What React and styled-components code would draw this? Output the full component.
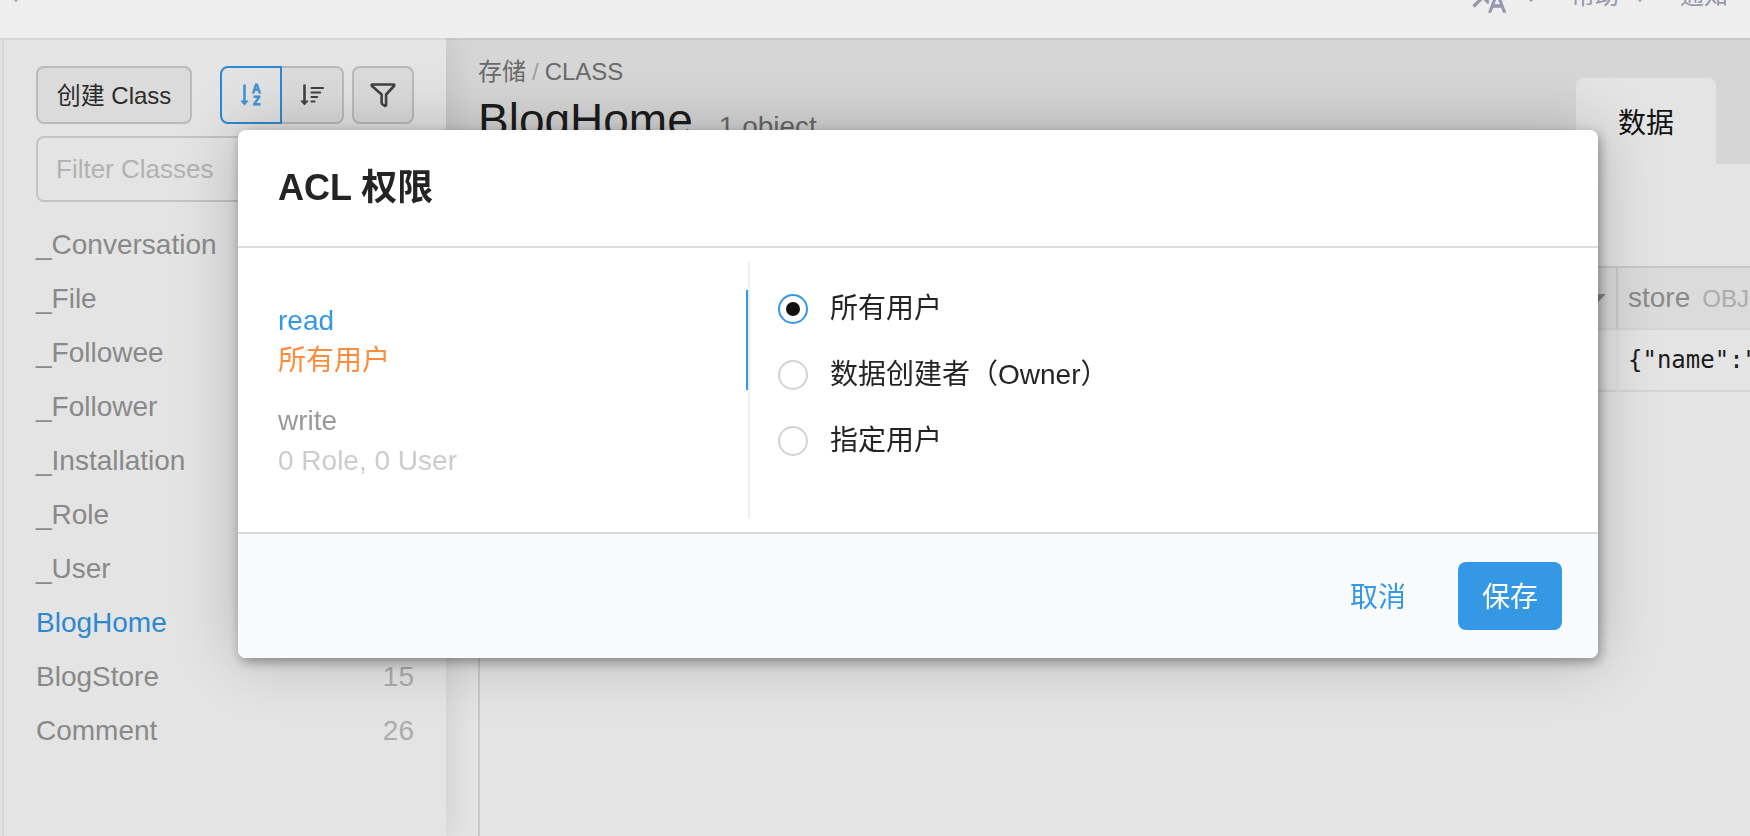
import React, { useState } from "react";
import styled, { createGlobalStyle, css } from "styled-components";
import { MdTranslate } from "react-icons/md";

const GlobalStyle = createGlobalStyle`
  *, *::before, *::after { box-sizing: border-box; }
  html, body, #root { height: 100%; }
  body {
    margin: 0;
    overflow: hidden;
    background: #e4e4e4;
    color: #242424;
    font-family: "Liberation Sans", "Noto Sans CJK SC", sans-serif;
    font-size: 28px;
  }
  button, input { font-family: inherit; margin: 0; }
  button { cursor: pointer; }
  h1, h2, p, ul { margin: 0; padding: 0; }
`;

const Page = styled.div`
  display: flex;
  flex-direction: column;
  min-height: 100%;
`;

/* Top navigation, partly scrolled out of view */
const TopBar = styled.header`
  position: relative;
  z-index: 2;
  display: flex;
  align-items: center;
  height: 84px;
  margin-top: -46px;
  padding: 0 22px 0 9px;
  background: #eeeeee;
  color: #9697ae;
`;

const TopNav = styled.nav`
  display: flex;
  align-items: center;
  margin-left: auto;
`;

const NavButton = styled.button`
  display: flex;
  align-items: center;
  gap: ${(p) => p.$gap || 0}px;
  margin-left: ${(p) => p.$space || 0}px;
  padding: 0;
  border: 0;
  background: none;
  color: inherit;
  font-size: 24px;
  line-height: 24px;
`;

const Caret = styled.span`
  width: 0;
  height: 0;
  border: ${(p) => p.$size}px solid transparent;
  border-top-color: currentColor;
  border-bottom-width: 0;
`;

const NavCaret = styled(Caret)`
  margin-top: 4px;
`;

const Columns = styled.div`
  display: flex;
  flex: 1;
`;

const Sidebar = styled.aside`
  position: relative;
  z-index: 1;
  flex: none;
  display: flex;
  width: 446px;
  padding-left: 2px;
  border-top: 2px solid #d7d7d7;
  background: #e4e4e4;
  box-shadow: 0 0 32px rgba(0, 0, 0, 0.12);
`;

const SidebarInner = styled.div`
  flex: 1;
  padding: 26px 32px 0;
  border-left: 2px solid #d7d7d7;
`;

const Toolbar = styled.div`
  display: flex;
  gap: 8px;
  margin-bottom: 12px;
`;

const ToolButton = styled.button`
  display: flex;
  align-items: center;
  justify-content: center;
  width: 62px;
  height: 58px;
  padding: 0;
  border: 2px solid #bababa;
  border-radius: 8px;
  background: #dbdbdb;
  color: #424242;
`;

const CreateButton = styled(ToolButton)`
  width: 156px;
  margin-right: auto;
  padding-bottom: 4px;
  color: #2c2c2c;
  font-size: 24px;
  white-space: nowrap;
`;

const SortGroup = styled.div`
  display: flex;

  ${ToolButton}:first-child { border-radius: 8px 0 0 8px; }
  ${ToolButton}:last-child { border-left-width: 0; border-radius: 0 8px 8px 0; }
`;

const SortButton = styled(ToolButton)`
  ${(p) =>
    p["aria-pressed"] &&
    css`
      border-color: #2d89cf;
      background: #e2e2e2;
      color: #4194d7;
    `}
`;

const FilterInput = styled.input`
  display: block;
  width: 100%;
  height: 66px;
  margin-bottom: 16px;
  padding: 0 18px;
  border: 2px solid #c3c3c3;
  border-radius: 8px;
  background: transparent;
  font-size: 26px;
  &::placeholder { color: #b2b2b2; opacity: 1; }
`;

const ClassList = styled.ul`
  list-style: none;
`;

const ClassLink = styled.a`
  display: flex;
  justify-content: space-between;
  color: ${(p) => (p.$current ? "#2d89cf" : "#898989")};
  line-height: 54px;
  text-decoration: none;
`;

const Count = styled.span`
  color: #acacac;
`;

const Main = styled.main`
  flex: 1;
  min-width: 0;
  display: flex;
  flex-direction: column;
`;

const MainHeader = styled.div`
  display: flex;
  align-items: flex-end;
  justify-content: space-between;
  height: 126px;
  padding: 0 34px 0 32px;
  border-top: 2px solid #c9c9c9;
  background: #d6d6d6;
`;

const Heading = styled.div`
  align-self: flex-start;
  padding-top: 16px;
`;

const Breadcrumb = styled.nav`
  display: flex;
  gap: 6px;
  color: #6a6a6a;
  font-size: 24px;
  line-height: 32px;
  a { color: inherit; text-decoration: none; }
`;

const Slash = styled.span`
  color: #a0a0a0;
`;

const TitleRow = styled.div`
  display: flex;
  align-items: baseline;
  gap: 26px;
  line-height: 64px;
`;

const Title = styled.h1`
  color: #1c1c1c;
  font-size: 46px;
  font-weight: 400;
`;

const ObjectCount = styled.span`
  color: #6a6a6a;
`;

const Tab = styled.button`
  width: 140px;
  height: 86px;
  padding: 0;
  border: 0;
  border-radius: 8px 8px 0 0;
  background: #e4e4e4;
  color: #111;
  font-size: 28px;
`;

const Grid = styled.div`
  flex: 1;
  margin: 102px 0 0 32px;
  border-top: 2px solid #c9c9c9;
  border-left: 2px solid #c9c9c9;
  overflow: hidden;
`;

const Table = styled.table`
  width: 100%;
  table-layout: fixed;
  border-spacing: 0;
`;

const StoreCol = styled.col`
  width: 132px;
`;

const HeadCell = styled.th`
  height: 62px;
  padding: 0 10px;
  border-right: 2px solid #c9c9c9;
  border-bottom: 2px solid #d5d5d5;
  background: #dbdbdb;
  color: #8a8a8a;
  font-weight: 400;
  text-align: left;
  white-space: nowrap;
  overflow: hidden;
  &:last-child { border-right: 0; }
`;

const HeadMenu = styled.span`
  display: flex;
  justify-content: flex-end;
`;

const FieldType = styled.span`
  margin-left: 12px;
  color: #acacac;
  font-size: 24px;
`;

const Cell = styled.td`
  height: 62px;
  padding: 0 10px;
  border-right: 2px solid #dedede;
  border-bottom: 2px solid #d5d5d5;
  color: #1c1c1c;
  font-family: "DejaVu Sans Mono", monospace;
  font-size: 24px;
  white-space: nowrap;
  overflow: hidden;
  &:last-child { border-right: 0; }
`;

const Overlay = styled.div`
  position: fixed;
  inset: 0;
  z-index: 10;
  padding: 130px 152px 0 238px;
`;

const Dialog = styled.section`
  border-radius: 8px;
  background: #fff;
  box-shadow: 0 0 64px rgba(0, 0, 0, 0.22), 2px 4px 12px rgba(0, 0, 0, 0.35);
`;

const DialogHeader = styled.header`
  padding: 36px 40px;
  border-bottom: 2px solid #dcdcdc;
`;

const DialogTitle = styled.h2`
  font-size: 36px;
  font-weight: 700;
  line-height: 44px;
`;

const DialogBody = styled.div`
  display: flex;
  padding: 14px 0;
`;

const Permissions = styled.div`
  flex: none;
  width: 37.5%;
  padding: 28px 0;
`;

const Permission = styled.button`
  display: block;
  width: 100%;
  padding: 11px 40px 9px;
  border: 0;
  border-right: 2px solid ${(p) => (p.$active ? "#3498e4" : "transparent")};
  background: none;
  color: ${(p) => (p.$active ? "#3498e4" : "#999")};
  font-size: 28px;
  line-height: 40px;
  text-align: left;
`;

const Summary = styled.span`
  display: block;
  color: ${(p) => (p.$open ? "#ff8c3a" : "#ccc")};
`;

const Options = styled.fieldset`
  flex: 1;
  min-width: 0;
  margin: 0;
  padding: 14px 28px;
  border: 0;
  border-left: 2px solid #eee;
`;

const Option = styled.label`
  display: flex;
  align-items: center;
  gap: 22px;
  line-height: 66px;
`;

const Radio = styled.input`
  appearance: none;
  display: grid;
  place-items: center;
  width: 30px;
  height: 30px;
  margin: 0;
  border: 2px solid #d3d3d3;
  border-radius: 50%;
  background: #fff;
  &:checked { border-color: #3498e4; }
  &:checked::before {
    content: "";
    width: 14px;
    height: 14px;
    border-radius: 50%;
    background: #111;
  }
`;

const DialogFooter = styled.footer`
  display: flex;
  justify-content: flex-end;
  gap: 28px;
  padding: 28px 36px;
  border-top: 2px solid #d9dadc;
  border-radius: 0 0 8px 8px;
  background: #f9fafc;
`;

const ActionButton = styled.button`
  height: 68px;
  padding: 0 24px 2px;
  border: 0;
  border-radius: 8px;
  background: ${(p) => (p.$primary ? "#3498e4" : "transparent")};
  color: ${(p) => (p.$primary ? "#fff" : "#3498e4")};
  font-size: 28px;
`;

const IconLetters = styled.text`
  fill: currentColor;
  stroke: currentColor;
  stroke-width: 0.8px;
  font-family: "Liberation Sans", sans-serif;
  font-size: 12px;
  font-weight: 700;
`;

function SortAlphaIcon() {
  return (
    <svg width="22" height="24" viewBox="0 0 22 24" aria-hidden="true">
      <path d="M4.5 2.5v17" stroke="currentColor" strokeWidth="2.6" strokeLinecap="round" />
      <path d="M1.2 17.5h6.6q1 0 .4.8L5.200 21.800q-.7.700-1.400 0L.8 18.300q-.6-.8.4-.8z" fill="currentColor" />
      <IconLetters x="12" y="10">A</IconLetters>
      <IconLetters x="13" y="22">Z</IconLetters>
    </svg>
  );
}

function SortAmountIcon() {
  return (
    <svg width="24" height="24" viewBox="0 0 24 24" aria-hidden="true">
      <path d="M4.500 2.500v17" stroke="currentColor" strokeWidth="2.600" strokeLinecap="round" />
      <path d="M1.200 17.500h6.600q1 0 .4.800L5.200 21.800q-.7.700-1.400 0L.8 18.300q-.6-.8.4-.8z" fill="currentColor" />
      <path
        d="M11.500 5h11.500M11.500 9.500h8.700M11.500 14h5.700M11.500 18.500h3"
        stroke="currentColor"
        strokeWidth="2.200"
        strokeLinecap="round"
      />
    </svg>
  );
}

function FunnelIcon() {
  return (
    <svg width="26" height="26" viewBox="0 0 26 26" fill="none" aria-hidden="true">
      <path
        d="M2.500 2.500h21q1.500 0 .5 1.500l-7.900 8.500v10.200q0 1.500-1.500 1l-2-1.200q-1-.6-1-1.700V12.500L2 4q-1-1.500.5-1.500z"
        stroke="currentColor"
        strokeWidth="2.600"
        strokeLinejoin="round"
      />
    </svg>
  );
}

const classes = [
  { name: "_Conversation" },
  { name: "_File" },
  { name: "_Followee" },
  { name: "_Follower" },
  { name: "_Installation" },
  { name: "_Role" },
  { name: "_User" },
  { name: "BlogHome", current: true },
  { name: "BlogStore", count: 15 },
  { name: "Comment", count: 26 },
];

const options = ["所有用户", "数据创建者（Owner）", "指定用户"];

export default function App() {
  const [selected, setSelected] = useState(0);
  const [permission, setPermission] = useState("read");

  return (
    <>
      <GlobalStyle />
      <Page>
        <TopBar>
          <NavCaret $size={7} />
          <TopNav>
            <NavButton $gap={16} aria-label="Language">
              <MdTranslate size={40} />
              <NavCaret $size={7} />
            </NavButton>
            <NavButton $gap={14} $space={33}>
              帮助
              <NavCaret $size={7} />
            </NavButton>
            <NavButton $space={33}>通知</NavButton>
          </TopNav>
        </TopBar>

        <Columns>
          <Sidebar>
            <SidebarInner>
              <Toolbar>
                <CreateButton>创建 Class</CreateButton>
                <SortGroup>
                  <SortButton aria-pressed={true} aria-label="Sort by name">
                    <SortAlphaIcon />
                  </SortButton>
                  <SortButton aria-pressed={false} aria-label="Sort by count">
                    <SortAmountIcon />
                  </SortButton>
                </SortGroup>
                <ToolButton aria-label="Filter">
                  <FunnelIcon />
                </ToolButton>
              </Toolbar>
              <FilterInput placeholder="Filter Classes" aria-label="Filter Classes" />
              <ClassList>
                {classes.map((c) => (
                  <li key={c.name}>
                    <ClassLink href="#" $current={c.current}>
                      {c.name}
                      {c.count && <Count>{c.count}</Count>}
                    </ClassLink>
                  </li>
                ))}
              </ClassList>
            </SidebarInner>
          </Sidebar>

          <Main>
            <MainHeader>
              <Heading>
                <Breadcrumb>
                  <a href="#">存储</a>
                  <Slash>/</Slash>
                  <a href="#">CLASS</a>
                </Breadcrumb>
                <TitleRow>
                  <Title>BlogHome</Title>
                  <ObjectCount>1 object</ObjectCount>
                </TitleRow>
              </Heading>
              <Tab>数据</Tab>
            </MainHeader>
            <Grid>
              <Table>
                <colgroup>
                  <col />
                  <StoreCol />
                </colgroup>
                <thead>
                  <tr>
                    <HeadCell>
                      <HeadMenu>
                        <Caret $size={8} />
                      </HeadMenu>
                    </HeadCell>
                    <HeadCell>
                      store<FieldType>OBJECT</FieldType>
                    </HeadCell>
                  </tr>
                </thead>
                <tbody>
                  <tr>
                    <Cell />
                    <Cell>{'{"name":"'}</Cell>
                  </tr>
                </tbody>
              </Table>
            </Grid>
          </Main>
        </Columns>
      </Page>

      <Overlay>
        <Dialog role="dialog" aria-modal="true" aria-labelledby="acl-title">
          <DialogHeader>
            <DialogTitle id="acl-title">ACL 权限</DialogTitle>
          </DialogHeader>
          <DialogBody>
            <Permissions>
              <Permission $active={permission === "read"} onClick={() => setPermission("read")}>
                read
                <Summary $open>所有用户</Summary>
              </Permission>
              <Permission $active={permission === "write"} onClick={() => setPermission("write")}>
                write
                <Summary>0 Role, 0 User</Summary>
              </Permission>
            </Permissions>
            <Options aria-label="read">
              {options.map((label, i) => (
                <Option key={label}>
                  <Radio
                    type="radio"
                    name="acl"
                    checked={selected === i}
                    onChange={() => setSelected(i)}
                  />
                  {label}
                </Option>
              ))}
            </Options>
          </DialogBody>
          <DialogFooter>
            <ActionButton>取消</ActionButton>
            <ActionButton $primary>保存</ActionButton>
          </DialogFooter>
        </Dialog>
      </Overlay>
    </>
  );
}
